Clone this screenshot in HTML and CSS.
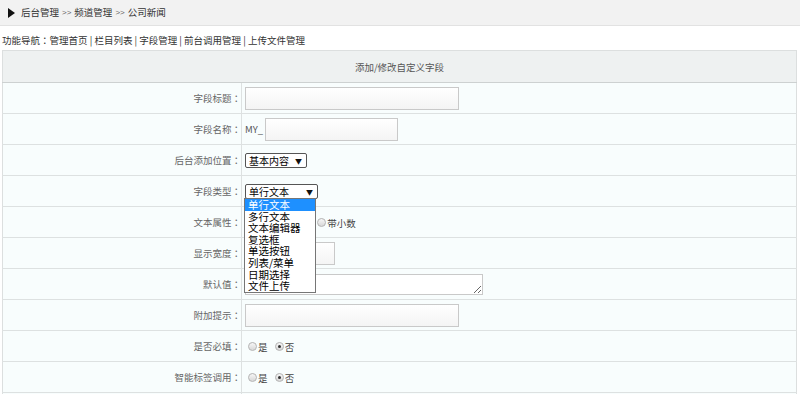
FILE: index.html
```html
<!DOCTYPE html>
<html>
<head>
    <meta charset="utf-8">
    <link rel="stylesheet" href="styles.css">
</head>
<body>
    <div class="topbar">
        <span class="arrow"></span>
        <span>后台管理</span> <span class="sep">&gt;&gt;</span> <span>频道管理</span> <span class="sep">&gt;&gt;</span> <span>公司新闻</span>
    </div>
    <div class="nav">
        功能导航<span class="colon">：</span><a href="#">管理首页</a> | <a href="#">栏目列表</a> | <a href="#">字段管理</a> | <a href="#">前台调用管理</a> | <a href="#">上传文件管理</a>
    </div>

    <table class="form-table">
        <tr>
            <th colspan="2">添加/修改自定义字段</th>
        </tr>
        <tr>
            <td class="label">字段标题<span class="colon">：</span></td>
            <td><input type="text" class="text long"></td>
        </tr>
        <tr>
            <td class="label">字段名称<span class="colon">：</span></td>
            <td><span class="prefix">MY_</span><input type="text" class="text mid"></td>
        </tr>
        <tr>
            <td class="label">后台添加位置<span class="colon">：</span></td>
            <td>
                <span class="select-wrap">
                    <select class="select pos">
                        <option>基本内容</option>
                        <option>扩展内容</option>
                    </select>
                </span>
            </td>
        </tr>
        <tr>
            <td class="label">字段类型<span class="colon">：</span></td>
            <td>
                <span class="select-wrap">
                    <select class="select type">
                        <option>单行文本</option>
                    </select>
                    <ul class="dropdown">
                        <li class="active">单行文本</li>
                        <li>多行文本</li>
                        <li>文本编辑器</li>
                        <li>复选框</li>
                        <li>单选按钮</li>
                        <li>列表/菜单</li>
                        <li>日期选择</li>
                        <li>文件上传</li>
                    </ul>
                </span>
            </td>
        </tr>
        <tr>
            <td class="label">文本属性<span class="colon">：</span></td>
            <td>
                <span class="radio-pad"></span>
                <label class="radio"><input type="radio" name="attr"> 带小数</label>
            </td>
        </tr>
        <tr>
            <td class="label">显示宽度<span class="colon">：</span></td>
            <td><input type="text" class="text short"></td>
        </tr>
        <tr>
            <td class="label">默认值<span class="colon">：</span></td>
            <td><textarea class="area"></textarea></td>
        </tr>
        <tr>
            <td class="label">附加提示<span class="colon">：</span></td>
            <td><input type="text" class="text long"></td>
        </tr>
        <tr>
            <td class="label">是否必填<span class="colon">：</span></td>
            <td>
                <label class="radio"><input type="radio" name="must"> 是</label>
                <label class="radio"><input type="radio" name="must" checked> 否</label>
            </td>
        </tr>
        <tr>
            <td class="label">智能标签调用<span class="colon">：</span></td>
            <td>
                <label class="radio"><input type="radio" name="tag"> 是</label>
                <label class="radio"><input type="radio" name="tag" checked> 否</label>
            </td>
        </tr>
        <tr>
            <td class="label">&nbsp;</td>
            <td>&nbsp;</td>
        </tr>
    </table>
</body>
</html>
```

FILE: styles.css
```css
body {
    margin: 0;
    font-family: "Noto Sans CJK SC", "Liberation Sans", sans-serif;
    font-size: 9.5px;
    color: #333;
    background: #fff;
}
.colon {
    font-family: "Noto Sans CJK TC", sans-serif;
}
.topbar {
    height: 25px;
    line-height: 25px;
    background: #f2f2f2;
    border-bottom: 1px solid #e2e2e2;
    padding-left: 8px;
    display: flex;
    align-items: center;
    gap: 3px;
    color: #333;
}
.topbar .arrow {
    width: 0;
    height: 0;
    border-left: 7px solid #111;
    border-top: 5px solid transparent;
    border-bottom: 5px solid transparent;
    margin-right: 3px;
}
.topbar .sep {
    color: #666;
    font-family: "Liberation Sans", sans-serif;
    font-size: 8px;
}
.nav {
    padding: 7px 2px 0;
    line-height: 14px;
    color: #333;
}
.nav a {
    color: #333;
    text-decoration: none;
}
.form-table {
    margin: 3px 0 0 2px;
    width: 795px;
    border-collapse: collapse;
    border: 1px solid #dcdfdf;
}
.form-table th {
    height: 31px;
    background: #eef1f1;
    border-bottom: 1px solid #cdd1d1;
    font-weight: normal;
    color: #555;
    text-align: center;
    padding: 0;
}
.form-table td {
    height: 30px;
    background: #f8fdfd;
    border-bottom: 1px solid #dde1e1;
    padding: 0 0 0 3px;
    vertical-align: middle;
}
.form-table td.label {
    width: 238px;
    text-align: right;
    color: #666;
    padding: 0;
    border-right: 1px solid #dde1e1;
}
.text {
    height: 23px;
    box-sizing: border-box;
    border: 1px solid #c9c9c9;
    background: linear-gradient(#fff, #f4f4f4);
    margin: 0;
    vertical-align: middle;
}
.text.long {
    width: 214px;
}
.text.mid {
    width: 133px;
}
.text.short {
    width: 90px;
}
.prefix {
    color: #555;
    margin-right: 2px;
    vertical-align: middle;
}
.area {
    width: 238px;
    height: 21px;
    box-sizing: border-box;
    border: 1px solid #c9c9c9;
    background: #fff;
    margin: 0;
    vertical-align: middle;
    display: inline-block;
}
.select-wrap {
    position: relative;
    display: inline-block;
    vertical-align: middle;
}
.select-wrap::after {
    content: "▼";
    position: absolute;
    right: 5px;
    top: 3px;
    font-size: 7px;
    color: #111;
    pointer-events: none;
}
.select {
    appearance: none;
    -webkit-appearance: none;
    height: 15px;
    border: 1px solid #555;
    border-radius: 2px;
    background: #fff;
    font-family: "Noto Sans CJK SC", sans-serif;
    font-size: 10px;
    color: #000;
    padding: 0 0 0 3px;
    margin: 0;
    line-height: 13px;
}
.select.pos {
    width: 62px;
}
.select.type {
    width: 73px;
}
.dropdown {
    position: absolute;
    left: -1px;
    top: 14px;
    width: 70px;
    margin: 0;
    padding: 0;
    list-style: none;
    background: #fff;
    border: 1px solid #767676;
    z-index: 10;
}
.dropdown li {
    height: 11.6px;
    line-height: 11.6px;
    font-size: 10.5px;
    color: #000;
    padding-left: 3px;
}
.dropdown li.active {
    background: #1e90ff;
    color: #fff;
}
.radio-pad {
    display: inline-block;
    width: 67px;
}
.radio {
    display: inline-flex;
    align-items: center;
    gap: 1px;
    margin-right: 2px;
    color: #444;
    vertical-align: middle;
}
.radio input {
    appearance: none;
    -webkit-appearance: none;
    width: 9px;
    height: 9px;
    margin: 0 0 0 3px;
    border: 1px solid #b5b5b5;
    border-radius: 50%;
    background: linear-gradient(#f6f6f6, #d8d8d8);
    position: relative;
}
.radio input:checked::after {
    content: "";
    position: absolute;
    left: 2px;
    top: 2px;
    width: 3px;
    height: 3px;
    border-radius: 50%;
    background: #333;
}
```
